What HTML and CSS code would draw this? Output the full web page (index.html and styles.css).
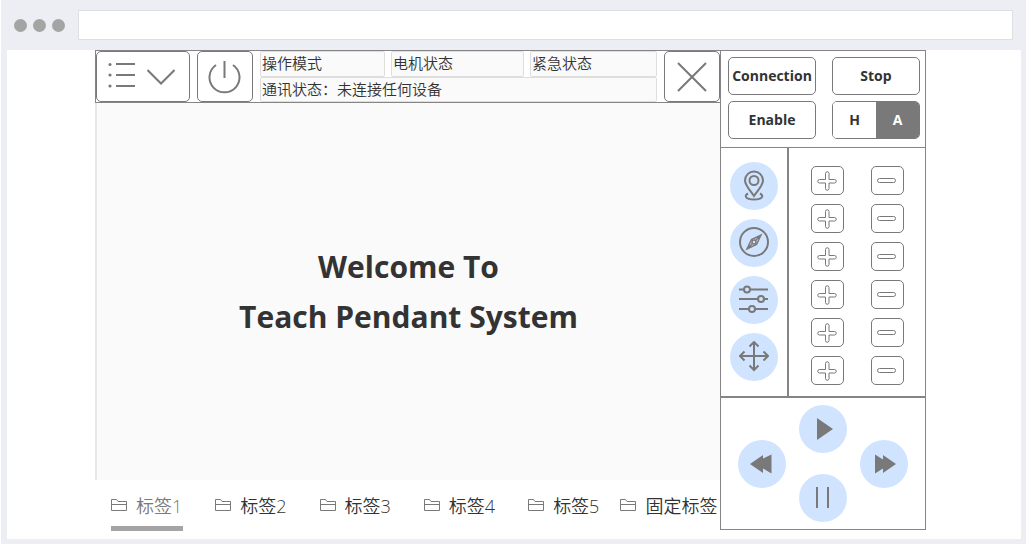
FILE: index.html
```html
<!DOCTYPE html>
<html lang="zh-CN">
<head>
<meta charset="utf-8">
<meta name="viewport" content="width=device-width, initial-scale=1">
<title>Teach Pendant System</title>
<link rel="stylesheet" href="styles.css">
</head>
<body>
<svg class="symbols" aria-hidden="true">
  <symbol id="folder" viewBox="0 0 16 14"><path d="M.5 12.500V1.500H5.500L7 3.500H15.500V12.500ZM.5 6.500H15.500"/></symbol>
  <symbol id="plus" viewBox="0 0 20 20"><path d="M8.500 8.500V2.500a1.500 1.500 0 0 1 3.500 0V8.500h5.500a1.500 1.500 0 0 1 0 3.500H12v5.500a1.500 1.500 0 0 1-3.500 0V12H2.500a1.500 1.500 0 0 1 0-3.500Z"/></symbol>
  <symbol id="minus" viewBox="0 0 20 20"><rect x=".5" y="7.500" width="18" height="4" rx="2"/></symbol>
</svg>
<div class="browser">
  <header class="chrome">
    <span class="dot"></span><span class="dot"></span><span class="dot"></span>
    <input class="address" type="text" aria-label="Address">
  </header>
  <main class="page">
    <div class="pendant">
      <section class="screen">
        <div class="toolbar">
          <button class="tool tool-menu" aria-label="Menu">
            <svg width="28" height="28" viewBox="0 0 28 28"><path d="M8 1H27M8 12H27M8 23H27"/><g class="solid"><circle cx="2" cy="1.500" r="1.500"/><circle cx="2" cy="12" r="1.600"/><circle cx="2" cy="23" r="1.600"/></g></svg>
            <svg width="28" height="28" viewBox="0 0 28 28"><path d="M.5 7 14 20.500 27.500 7"/></svg>
          </button>
          <button class="tool" aria-label="Power">
            <svg width="34" height="34" viewBox="0 0 34 34"><path d="M16.500 1V18M8 5A15 15 0 1 0 25 5"/></svg>
          </button>
          <div class="status">
            <span class="cell">操作模式</span>
            <span class="cell">电机状态</span>
            <span class="cell">紧急状态</span>
            <span class="cell cell-wide">通讯状态：未连接任何设备</span>
          </div>
          <button class="tool" aria-label="Close">
            <svg width="32" height="32" viewBox="0 0 32 32"><path d="M2 2 30 30M30 2 2 30"/></svg>
          </button>
        </div>
        <h1 class="welcome">Welcome To<br>Teach Pendant System</h1>
        <nav class="tabs">
          <a class="tab active" href="#1"><svg width="16" height="14"><use href="#folder"/></svg>标签1</a>
          <a class="tab" href="#2"><svg width="16" height="14"><use href="#folder"/></svg>标签2</a>
          <a class="tab" href="#3"><svg width="16" height="14"><use href="#folder"/></svg>标签3</a>
          <a class="tab" href="#4"><svg width="16" height="14"><use href="#folder"/></svg>标签4</a>
          <a class="tab tab-last" href="#5"><svg width="16" height="14"><use href="#folder"/></svg>标签5</a>
          <a class="tab" href="#fixed"><svg width="16" height="14"><use href="#folder"/></svg>固定标签</a>
        </nav>
      </section>
      <aside class="controls">
        <div class="commands">
          <button class="command">Connection</button>
          <button class="command">Stop</button>
          <button class="command">Enable</button>
          <div class="switch" role="group" aria-label="Mode"><button>H</button><button class="on" aria-pressed="true">A</button></div>
        </div>
        <div class="jog">
          <div class="modes">
            <button class="round" aria-label="Position"><svg width="30" height="32" viewBox="0 0 30 32"><path d="M15 26C10 19 6 15 6 10.500a9 9 0 0 1 18 0C24 15 20 19 15 26Z"/><circle cx="15" cy="10.500" r="4.500"/><path d="M9 23.500C5 25.500 6 29.500 15 29.500S25 25.500 21 23.500"/></svg></button>
            <button class="round" aria-label="Compass"><svg width="30" height="32" viewBox="0 0 30 32"><circle cx="15" cy="15" r="14"/><path class="fine" d="M22 8 17.500 17.500 8 22 12.500 12.500ZM8 22 13.500 16.500M22 8 16.500 13.500"/><circle class="fine" cx="15" cy="15" r="2"/></svg></button>
            <button class="round" aria-label="Settings"><svg width="30" height="32" viewBox="0 0 30 32"><path d="M0 5.500H5M11 5.500H29M0 15H19M25 15H29M0 25H10M16 25H29"/><circle cx="8" cy="5.500" r="3"/><circle cx="22" cy="15" r="3"/><circle cx="13" cy="25" r="3"/></svg></button>
            <button class="round" aria-label="Move"><svg width="30" height="32" viewBox="0 0 30 32"><path d="M15 1V29M1 15H29M10.500 5.500 15 1 19.500 5.500M10.500 24.500 15 29 19.500 24.500M5.500 10.500 1 15 5.500 19.500M24.500 10.500 29 15 24.500 19.500"/></svg></button>
          </div>
          <div class="axes">
            <button class="step" aria-label="Axis 1 plus"><svg width="20" height="20"><use href="#plus"/></svg></button>
            <button class="step" aria-label="Axis 1 minus"><svg width="20" height="20"><use href="#minus"/></svg></button>
            <button class="step" aria-label="Axis 2 plus"><svg width="20" height="20"><use href="#plus"/></svg></button>
            <button class="step" aria-label="Axis 2 minus"><svg width="20" height="20"><use href="#minus"/></svg></button>
            <button class="step" aria-label="Axis 3 plus"><svg width="20" height="20"><use href="#plus"/></svg></button>
            <button class="step" aria-label="Axis 3 minus"><svg width="20" height="20"><use href="#minus"/></svg></button>
            <button class="step" aria-label="Axis 4 plus"><svg width="20" height="20"><use href="#plus"/></svg></button>
            <button class="step" aria-label="Axis 4 minus"><svg width="20" height="20"><use href="#minus"/></svg></button>
            <button class="step" aria-label="Axis 5 plus"><svg width="20" height="20"><use href="#plus"/></svg></button>
            <button class="step" aria-label="Axis 5 minus"><svg width="20" height="20"><use href="#minus"/></svg></button>
            <button class="step" aria-label="Axis 6 plus"><svg width="20" height="20"><use href="#plus"/></svg></button>
            <button class="step" aria-label="Axis 6 minus"><svg width="20" height="20"><use href="#minus"/></svg></button>
          </div>
        </div>
        <div class="playback">
          <button class="round" aria-label="Rewind"><svg width="24" height="24" viewBox="0 0 24 24"><path class="solid" d="M0 12 13 3V6.500L21.500 2.500V21.500L13 16.500V21Z"/></svg></button>
          <div class="stack">
            <button class="round" aria-label="Play"><svg width="24" height="24" viewBox="0 0 24 24"><path class="solid" d="M6 1 22 12 6 23Z"/></svg></button>
            <button class="round" aria-label="Pause"><svg width="24" height="24" viewBox="0 0 24 24"><path d="M6 1V22M17 1V22"/></svg></button>
          </div>
          <button class="round" aria-label="Fast forward"><svg width="24" height="24" viewBox="0 0 24 24"><path class="solid" d="M3 2.500 11 7.500V3L24 12 11 21V16.500L3 21.500Z"/></svg></button>
        </div>
      </aside>
    </div>
  </main>
</div>
</body>
</html>
```
FILE: styles.css
```css
* { box-sizing: border-box; }
body {
  margin: 0;
  background: #fff;
  color: #333;
  font-family: "Open Sans", "Noto Sans CJK SC", sans-serif;
}
button {
  margin: 0;
  padding: 0;
  font: inherit;
  color: inherit;
  background: #fff;
  border: 1px solid #797979;
  display: flex;
  align-items: center;
  justify-content: center;
}
svg { fill: none; stroke: #797979; stroke-width: 2; flex: none; }
.solid { fill: #797979; stroke: none; }
.fine { stroke-width: 1.5; }
.symbols { display: none; }

.browser {
  min-height: 100vh;
  margin: 0 1px;
  padding: 0 5px 5px 6px;
  background: #edeef3;
  display: flex;
  flex-direction: column;
}
.chrome {
  height: 50px;
  padding: 0 8px 0 7px;
  display: flex;
  align-items: center;
  gap: 6px;
}
.dot { width: 13px; height: 13px; border-radius: 50%; background: #a4a4a4; }
.address {
  flex: 1;
  height: 30px;
  margin-left: 7px;
  background: #fff;
  border: 1px solid #dedfe1;
  outline: none;
}
.page {
  flex: 1;
  display: flex;
  padding: 0 95px 0 88px;
  background: #fff;
}
.pendant {
  flex: 1;
  display: grid;
  grid-template-columns: minmax(0, 1fr) 206px;
}

.screen { display: flex; flex-direction: column; }
.toolbar {
  display: flex;
  gap: 7px;
  height: 53px;
  border: 1px solid #858585;
  border-width: 1px 0 1px 1px;
  background: #fff;
}
.tool { width: 56px; border-radius: 5px; }
.tool-menu { width: 94px; gap: 11px; padding-right: 3px; }
.status {
  flex: 1;
  display: grid;
  grid-template-columns: 125fr 133fr 127fr;
  grid-template-rows: 26px 25px;
  column-gap: 6px;
  font-size: 15px;
  font-weight: 350;
  line-height: 23px;
}
.cell {
  padding-left: 1px;
  white-space: nowrap;
  background: #fafafa;
  border: 1px solid #dedede;
  border-radius: 2px;
}
.cell-wide { grid-column: 1 / -1; }
.welcome {
  flex: 1;
  margin: 0;
  padding-top: 1px;
  display: grid;
  place-content: center;
  text-align: center;
  background: #fafafa;
  border-left: 2px solid #e8e8e8;
  font-size: 30px;
  font-weight: 700;
  line-height: 50px;
}
.tabs {
  display: flex;
  gap: 32px;
  height: 59px;
  padding: 5px 0 8px 16px;
  font-size: 18px;
  font-weight: 350;
}
.tab {
  display: flex;
  align-items: center;
  gap: 9px;
  padding: 0 1px 2px 0;
  border-bottom: 5px solid transparent;
  color: #333;
  text-decoration: none;
  white-space: nowrap;
}
.tab svg { stroke-width: 1; }
.tab.active { color: #797979; border-color: #a4a4a4; }
.tab-last { margin-right: -12px; }

.controls {
  display: flex;
  flex-direction: column;
  margin-bottom: 9px;
  border: 1px solid #858585;
}
.commands {
  display: grid;
  grid-template-columns: 1fr 1fr;
  gap: 6px 16px;
  padding: 6px 5px 8px 7px;
  font-size: 14px;
  font-weight: 700;
}
.command, .switch { height: 38px; border: 1px solid #797979; border-radius: 5px; }
.switch { display: grid; grid-template-columns: 1fr 1fr; overflow: hidden; }
.switch button { border: 0; padding-bottom: 1px; }
.command { padding-bottom: 1px; }
.switch .on { background: #797979; color: #fff; }
.jog {
  flex: 1;
  display: grid;
  grid-template-columns: 68px 1fr;
  border-top: 1px solid #858585;
}
.modes {
  display: flex;
  flex-direction: column;
  align-items: center;
  gap: 9px;
  padding-top: 14px;
  border-right: 2px solid #858585;
}
.round {
  width: 48px;
  height: 48px;
  border: 0;
  border-radius: 50%;
  background: #d0e4ff;
}
.axes {
  display: grid;
  grid-template-columns: 33px 33px;
  gap: 9px 27px;
  place-content: start center;
  padding: 18px 0 0 0;
}
.step { width: 33px; height: 29px; border-radius: 5px; }
.step svg { stroke-width: 1; }
.playback {
  display: flex;
  justify-content: center;
  align-items: center;
  gap: 13px;
  height: 133px;
  border-top: 2px solid #858585;
}
.stack { display: flex; flex-direction: column; gap: 21px; }
```
